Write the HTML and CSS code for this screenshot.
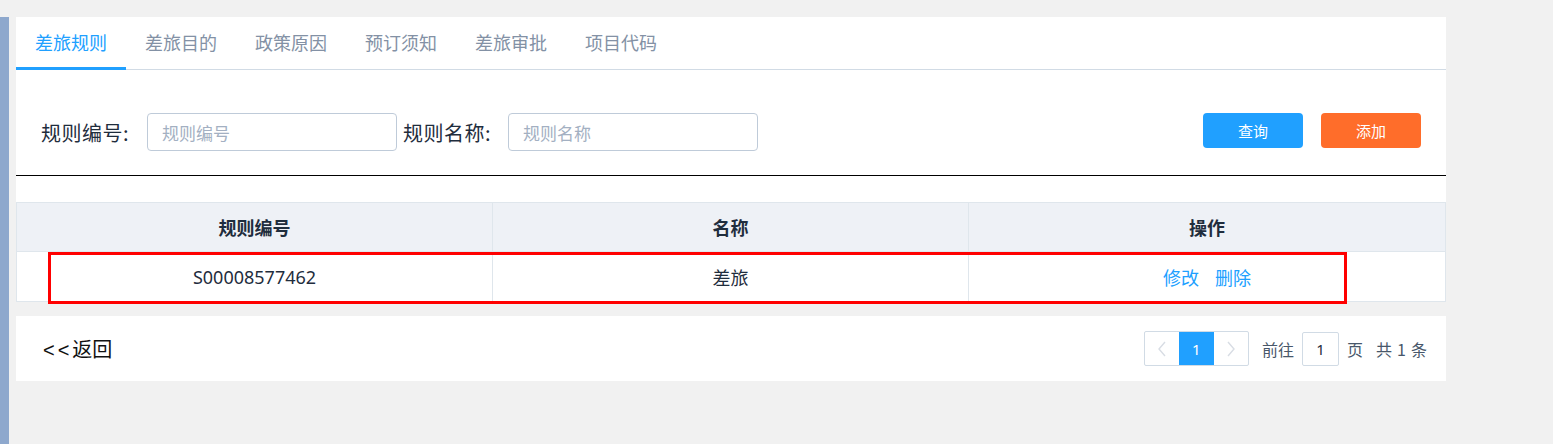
FILE: index.html
```html
<!DOCTYPE html>
<html lang="zh-CN">
<head>
<meta charset="utf-8">
<title>差旅规则</title>
<link rel="stylesheet" href="styles.css">
</head>
<body>
<div class="page">
  <div class="sidebar"></div>
  <div class="main">
    <div class="panel">
      <div class="tabs">
        <div class="tab active">差旅规则</div>
        <div class="tab">差旅目的</div>
        <div class="tab">政策原因</div>
        <div class="tab">预订须知</div>
        <div class="tab">差旅审批</div>
        <div class="tab">项目代码</div>
      </div>
      <div class="search">
        <div class="field">
          <label class="field-label">规则编号:</label>
          <input class="field-input" type="text" placeholder="规则编号">
        </div>
        <div class="field field-second">
          <label class="field-label">规则名称:</label>
          <input class="field-input" type="text" placeholder="规则名称">
        </div>
        <div class="actions">
          <button class="btn btn-primary">查询</button>
          <button class="btn btn-warning">添加</button>
        </div>
      </div>
      <div class="table-wrap">
        <div class="table">
          <div class="cell head">规则编号</div>
          <div class="cell head">名称</div>
          <div class="cell head last">操作</div>
          <div class="cell body">S00008577462</div>
          <div class="cell body">差旅</div>
          <div class="cell body last"><a class="link">修改</a><a class="link">删除</a></div>
          <div class="highlight"></div>
        </div>
      </div>
    </div>
    <div class="footer">
      <div class="back"><span class="arrows">&lt;&lt;</span>返回</div>
      <div class="pagination">
        <div class="pager">
          <div class="pg-btn">
            <svg width="10" height="16" viewBox="0 0 10 16"><polyline points="8,1 2,8 8,15" fill="none" stroke="#d8dde4" stroke-width="1.4"/></svg>
          </div>
          <div class="pg-num active">1</div>
          <div class="pg-btn">
            <svg width="10" height="16" viewBox="0 0 10 16"><polyline points="2,1 8,8 2,15" fill="none" stroke="#d8dde4" stroke-width="1.4"/></svg>
          </div>
        </div>
        <span class="pg-text goto">前往</span>
        <div class="pg-input">1</div>
        <span class="pg-text">页</span>
        <span class="pg-text total">共 1 条</span>
      </div>
    </div>
  </div>
</div>
</body>
</html>
```
FILE: styles.css
```css
* { box-sizing: border-box; }
html, body { margin: 0; padding: 0; }
body {
  background: #f1f1f1;
  font-family: "Noto Sans", "Noto Sans CJK SC", sans-serif;
  color: #1f2d3d;
  width: 1553px;
  height: 444px;
  overflow: hidden;
}
.page {
  display: flex;
  min-height: 444px;
}
.sidebar {
  width: 9px;
  margin-top: 17px;
  background: #8ea8cd;
}
.main {
  margin-left: 7px;
  padding-top: 17px;
  width: 1430px;
}
.panel { background: #fff; }

.tabs {
  display: flex;
  border-bottom: 1px solid #d1dbe5;
  height: 53px;
}
.tab {
  height: 53px;
  padding: 0 19px;
  margin-bottom: -1px;
  font-size: 18px;
  line-height: 51px;
  color: #8391a5;
  border-bottom: 3px solid transparent;
  font-family: "Noto Sans CJK SC", sans-serif;
}
.tab.active {
  color: #20a0ff;
  border-bottom-color: #20a0ff;
}

.search {
  display: flex;
  align-items: flex-start;
  padding: 43px 25px 24px 25px;
  border-bottom: 1px solid #000;
}
.field {
  display: flex;
  align-items: center;
  height: 38px;
}
.field-second { margin-left: 6px; }
.field-label {
  width: 106px;
  font-size: 20px;
  color: #1f2d3d;
  font-family: "Noto Sans CJK SC", sans-serif;
  white-space: nowrap;
  letter-spacing: 0.5px;
}
.field-second .field-label { width: 105px; }
.field-input {
  width: 250px;
  height: 38px;
  border: 1px solid #bfcbd9;
  border-radius: 4px;
  padding: 0 14px;
  font-size: 17px;
  font-family: "Noto Sans CJK SC", sans-serif;
  color: #1f2d3d;
  outline: none;
}
.field-input::placeholder { color: #a3b0c2; }

.actions {
  margin-left: auto;
  display: flex;
  gap: 18px;
}
.btn {
  width: 100px;
  height: 35px;
  border: none;
  border-radius: 4px;
  color: #fff;
  font-size: 15px;
  font-family: "Noto Sans CJK SC", sans-serif;
  padding: 0;
}
.btn-primary { background: #20a0ff; }
.btn-warning { background: #ff6d2a; }

.table-wrap { padding-top: 26px; }
.table {
  position: relative;
  display: grid;
  grid-template-columns: 476px 476px 1fr;
  border: 1px solid #dfe6ec;
  border-bottom: none;
}
.cell {
  display: flex;
  align-items: center;
  justify-content: center;
  border-bottom: 1px solid #dfe6ec;
  border-right: 1px solid #dfe6ec;
  font-size: 18px;
  font-family: "Noto Sans", "Noto Sans CJK SC", sans-serif;
  color: #1f2d3d;
}
.cell.last { border-right: none; }
.cell.head {
  height: 49px;
  background: #eef1f6;
  font-weight: 700;
  font-family: "Noto Sans CJK SC", sans-serif;
}
.cell.body { height: 50px; }
.link {
  color: #20a0ff;
  font-family: "Noto Sans CJK SC", sans-serif;
  margin: 0 8px;
  cursor: pointer;
}
.highlight {
  position: absolute;
  left: 31px;
  top: 49px;
  width: 1299px;
  height: 52px;
  border: 3px solid #ff0000;
  pointer-events: none;
}

.footer {
  margin-top: 14px;
  height: 65px;
  background: #fff;
  display: flex;
  align-items: center;
  justify-content: space-between;
  padding: 0 19px 0 27px;
}
.back {
  font-size: 20px;
  color: #111;
  font-family: "Noto Sans CJK SC", sans-serif;
}
.arrows {
  letter-spacing: 3px;
  font-family: "Liberation Sans", sans-serif;
}
.pagination {
  display: flex;
  align-items: center;
}
.pager {
  display: flex;
  height: 35px;
  border: 1px solid #d1dbe5;
  border-radius: 2px;
}
.pg-btn {
  width: 34px;
  display: flex;
  align-items: center;
  justify-content: center;
}
.pg-num {
  width: 35px;
  display: flex;
  align-items: center;
  justify-content: center;
  font-size: 15px;
  font-family: "Noto Sans", sans-serif;
}
.pg-num.active { background: #20a0ff; color: #fff; }
.pg-text {
  font-size: 16px;
  color: #48576a;
  font-family: "Noto Sans CJK SC", sans-serif;
}
.goto { margin-left: 13px; }
.pg-input {
  width: 37px;
  height: 34px;
  margin: 0 8px;
  border: 1px solid #d1dbe5;
  border-radius: 2px;
  display: flex;
  align-items: center;
  justify-content: center;
  font-size: 15px;
  color: #1f2d3d;
  font-family: "Noto Sans", sans-serif;
}
.total {
  margin-left: 13px;
  word-spacing: 1.5px;
}
```
